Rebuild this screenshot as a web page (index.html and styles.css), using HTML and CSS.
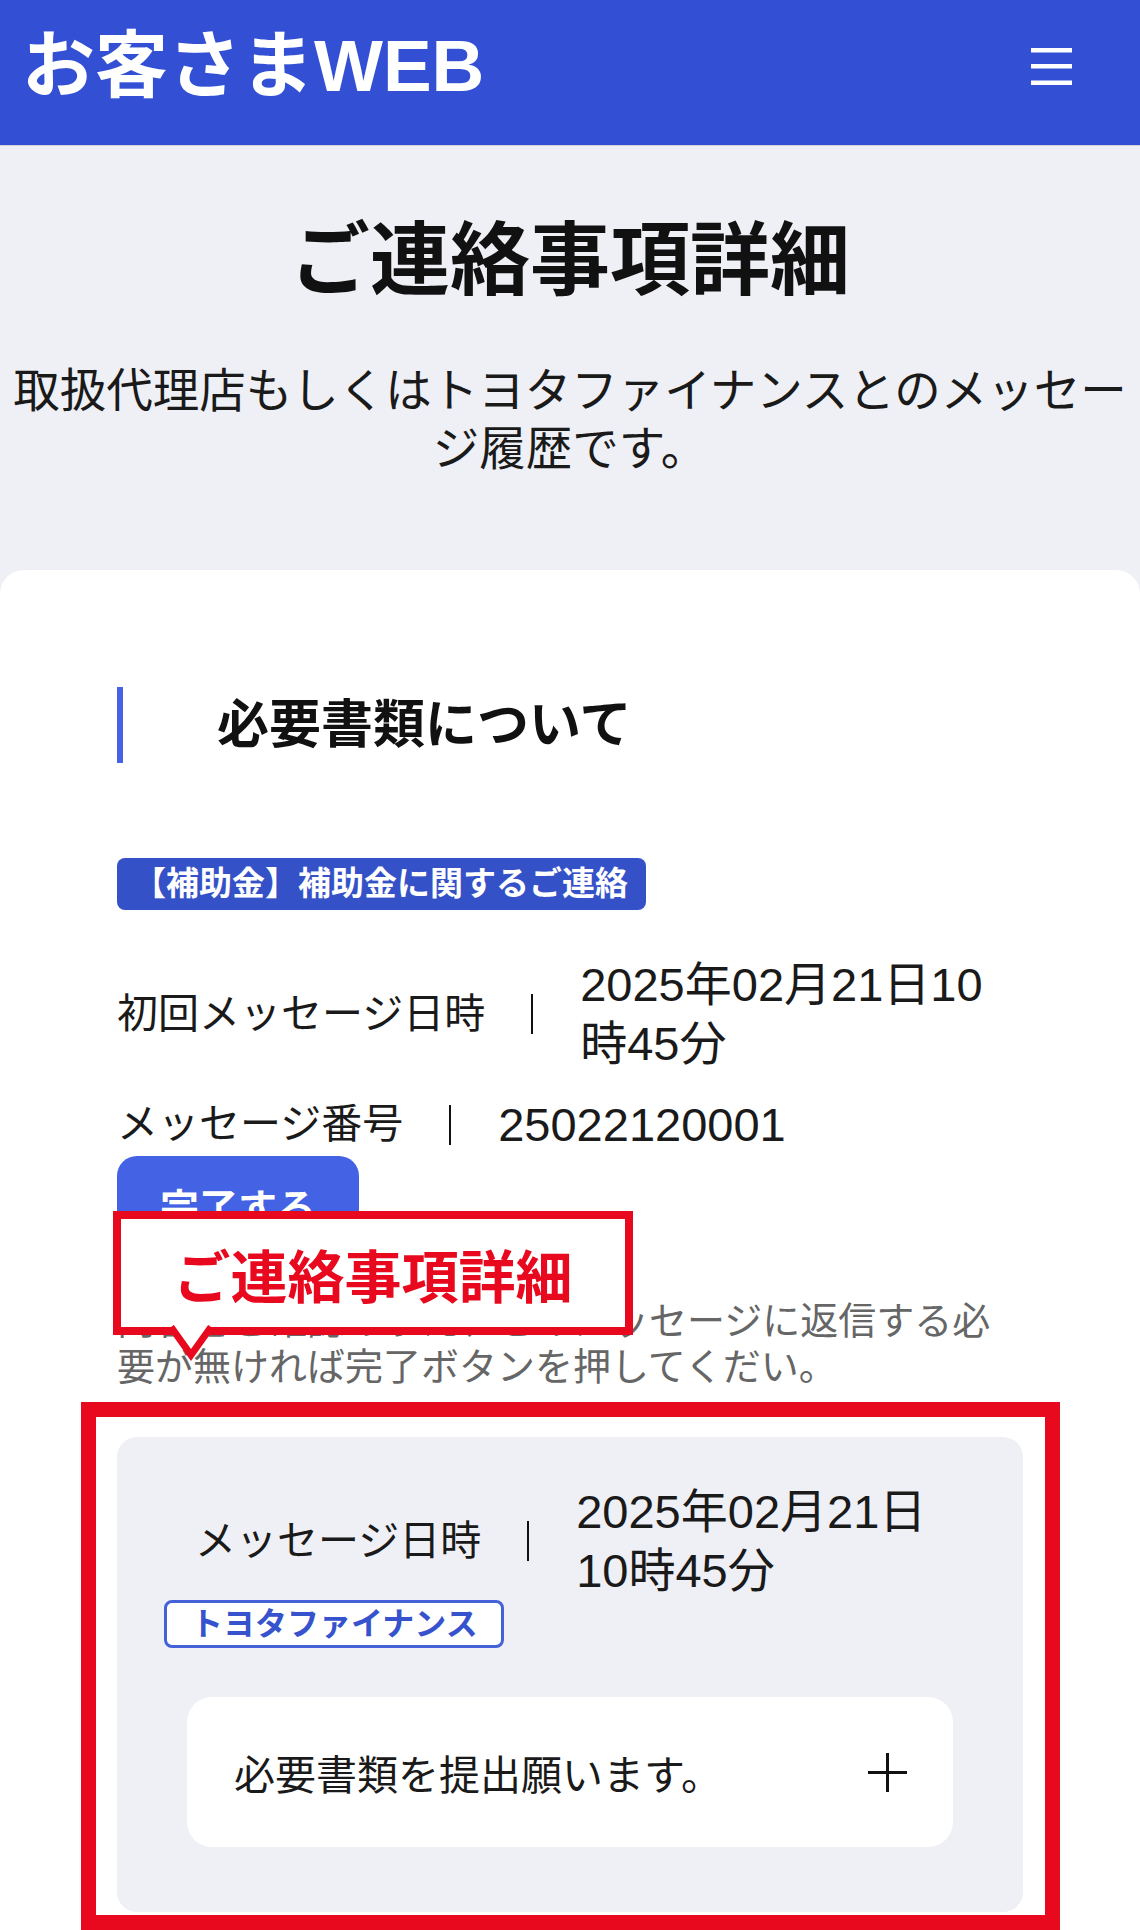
FILE: index.html
```html
<!DOCTYPE html>
<html lang="ja">
<head>
    <meta charset="UTF-8">
    <meta name="viewport" content="width=device-width, initial-scale=1.0">
    <title>ご連絡事項詳細 | お客さまWEB</title>
    <link rel="stylesheet" href="styles.css">
</head>
<body>
    <header class="site-header">
        <div class="logo">お客さまWEB</div>
        <button class="menu-btn" aria-label="メニュー">
            <svg width="41" height="37" viewBox="0 0 41 37">
                <rect x="0" y="0" width="41" height="4.5" fill="#fff"/>
                <rect x="0" y="16" width="41" height="4.5" fill="#fff"/>
                <rect x="0" y="32.5" width="41" height="4.5" fill="#fff"/>
            </svg>
        </button>
    </header>

    <main>
        <h1 class="page-title">ご連絡事項詳細</h1>
        <p class="page-lead">取扱代理店もしくはトヨタファイナンスとのメッセージ履歴です。</p>

        <section class="card">
            <h2 class="section-title">必要書類について</h2>

            <span class="category">【補助金】補助金に関するご連絡</span>

            <div class="info-row first">
                <span class="info-label">初回メッセージ日時</span>
                <span class="sep"></span>
                <span class="info-value">2025年02月21日10時45分</span>
            </div>
            <div class="info-row">
                <span class="info-label">メッセージ番号</span>
                <span class="sep"></span>
                <span class="info-value">25022120001</span>
            </div>

            <button class="done-btn">完了する</button>

            <p class="note">内容をご確認のうえ、このメッセージに返信する必要が無ければ完了ボタンを押してくだい。</p>

            <div class="thread">
                <div class="info-row thread-date">
                    <span class="info-label">メッセージ日時</span>
                    <span class="sep"></span>
                    <span class="info-value">2025年02月21日10時45分</span>
                </div>
                <span class="sender">トヨタファイナンス</span>
                <div class="bubble">
                    <span>必要書類を提出願います。</span>
                    <svg width="41" height="41" viewBox="0 0 41 41">
                        <path d="M20.5 1 V40 M1 20.5 H40" stroke="#111" stroke-width="3" fill="none"/>
                    </svg>
                </div>
            </div>
        </section>
    </main>

    <!-- annotation overlay -->
    <div class="callout">ご連絡事項詳細</div>
    <svg class="callout-tail" width="56" height="48" viewBox="0 0 56 48">
        <polygon points="9,0 28,27 47,0" fill="#fff"/>
        <polyline points="8,2 28,30 48,2" fill="none" stroke="#e8091e" stroke-width="7"/>
    </svg>
    <div class="highlight-frame"></div>
</body>
</html>
```

FILE: styles.css
```css
body {
    margin: 0;
    position: relative;
    background-color: #eff0f5;
    font-family: "Liberation Sans", "Noto Sans CJK JP", sans-serif;
    color: #1a1a1a;
}

.site-header {
    height: 145px;
    box-sizing: border-box;
    padding: 0 68px 13px 22px;
    display: flex;
    align-items: center;
    justify-content: space-between;
    background-color: #3350d5;
    box-shadow: 0 1px 0 rgba(0,0,0,0.12);
}

.logo {
    color: white;
    font-size: 73px;
    font-weight: bold;
    line-height: 80px;
}

.menu-btn {
    background: none;
    border: none;
    padding: 0;
    display: flex;
}

.page-title {
    margin: 68px 0 0;
    font-size: 80px;
    line-height: 96px;
    font-weight: bold;
    text-align: center;
    color: #111;
}

.page-lead {
    margin: 53px 0 0;
    font-size: 46.5px;
    line-height: 58px;
    text-align: center;
}

.card {
    margin-top: 92px;
    padding: 117px 117px 18px;
    background-color: white;
    border-radius: 24px 24px 0 0;
}

.section-title {
    margin: 0;
    padding-left: 94px;
    border-left: 6px solid #4862e6;
    font-size: 52px;
    line-height: 76px;
    font-weight: bold;
    color: #111;
}

.category {
    display: block;
    width: fit-content;
    margin-top: 95px;
    padding: 0 18px 0 16px;
    background-color: #3551c8;
    color: white;
    font-size: 33px;
    font-weight: bold;
    line-height: 52px;
    border-radius: 8px;
}

.info-row {
    display: flex;
    align-items: center;
    margin-top: 22px;
}

.info-row.first {
    margin-top: 45px;
}

.info-label {
    flex: none;
    font-size: 41px;
    line-height: 59px;
}

.sep {
    flex: none;
    width: 2px;
    height: 40px;
    margin: 0 47px 0 46px;
    background-color: #111;
}

.info-value {
    max-width: 420px;
    font-size: 47px;
    line-height: 59px;
}

.done-btn {
    display: block;
    margin-top: 2px;
    padding: 25px 43px;
    border: none;
    border-radius: 20px;
    background-color: #4462e4;
    color: white;
    font: inherit;
    font-size: 39px;
    font-weight: bold;
    line-height: 56px;
}

.note {
    margin: 36px 0 0;
    font-size: 38px;
    line-height: 46px;
    color: #666;
}

.thread {
    margin-top: 47px;
    padding: 45px 70px 65px;
    background-color: #eff0f5;
    border-radius: 20px;
}

.thread-date {
    margin: 0 0 0 8px;
}

.sender {
    display: block;
    width: fit-content;
    margin-left: -23px;
    padding: 0 23px 0 24px;
    border: 3px solid #4461d8;
    border-radius: 8px;
    background-color: white;
    color: #3652cc;
    font-size: 32px;
    font-weight: bold;
    line-height: 42px;
}

.bubble {
    margin-top: 49px;
    height: 150px;
    box-sizing: border-box;
    padding: 0 45px 0 47px;
    display: flex;
    align-items: center;
    justify-content: space-between;
    background-color: white;
    border-radius: 25px;
    font-size: 41px;
}

/* annotation overlay */
.callout {
    position: absolute;
    left: 113px;
    top: 1211px;
    width: 520px;
    height: 124px;
    box-sizing: border-box;
    border: 8px solid #e8091e;
    background-color: white;
    display: flex;
    align-items: center;
    justify-content: center;
    color: #e8091e;
    font-size: 57px;
    font-weight: bold;
}

.callout-tail {
    position: absolute;
    left: 163px;
    top: 1325px;
}

.highlight-frame {
    position: absolute;
    left: 81px;
    top: 1402px;
    width: 979px;
    height: 528px;
    box-sizing: border-box;
    border: 15px solid #e8091e;
}
```
